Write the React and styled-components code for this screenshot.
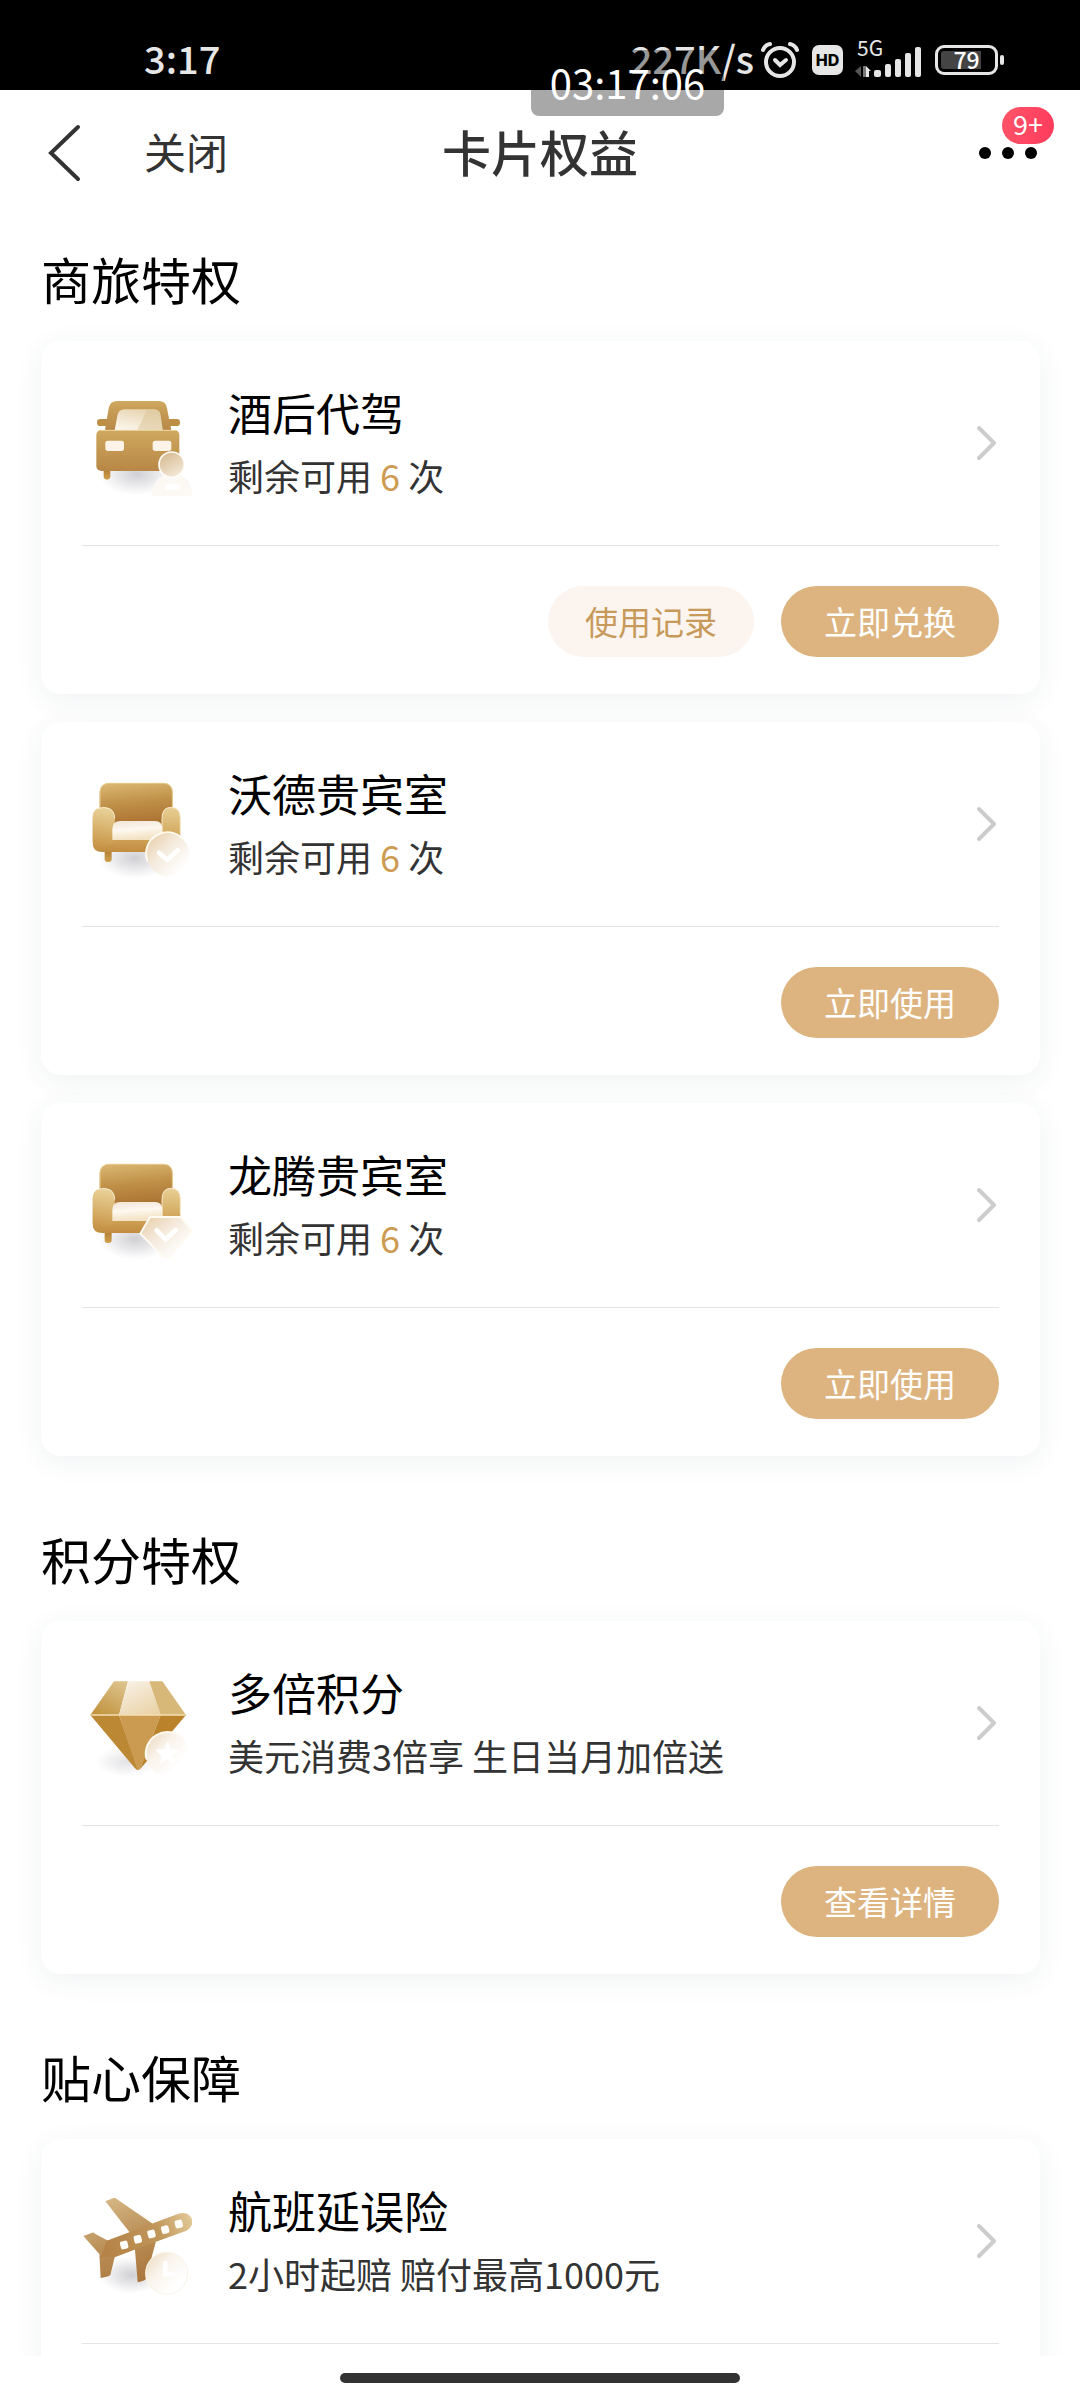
import styled, { createGlobalStyle } from 'styled-components';

const sections = [
    {
        title: '商旅特权',
        cards: [
            { id: 'driver', icon: 'car', title: '酒后代驾', count: 6, actions: ['使用记录', '立即兑换'] },
            { id: 'wode', icon: 'sofaRound', title: '沃德贵宾室', count: 6, actions: ['立即使用'] },
            { id: 'longteng', icon: 'sofaHex', title: '龙腾贵宾室', count: 6, actions: ['立即使用'] },
        ],
    },
    {
        title: '积分特权',
        cards: [
            { id: 'points', icon: 'diamond', title: '多倍积分', text: '美元消费3倍享 生日当月加倍送', actions: ['查看详情'] },
        ],
    },
    {
        title: '贴心保障',
        cards: [
            { id: 'flight', icon: 'plane', title: '航班延误险', text: '2小时起赔 赔付最高1000元', actions: [] },
        ],
    },
];

// gradients shared by all benefit icons
function IconDefs() {
    return (
        <HiddenSvg aria-hidden="true">
            <defs>
                <linearGradient id="gold" x1="0" y1="0" x2="0" y2="1">
                    <stop offset="0" stopColor="#cfa85e" />
                    <stop offset="1" stopColor="#b88747" />
                </linearGradient>
                <linearGradient id="goldDark" x1="0" y1="0" x2="0.15" y2="1">
                    <stop offset="0" stopColor="#dcb973" />
                    <stop offset="0.45" stopColor="#bf9048" />
                    <stop offset="1" stopColor="#a5692b" />
                </linearGradient>
                <linearGradient id="arm" x1="0.6" y1="0" x2="0.4" y2="1">
                    <stop offset="0" stopColor="#ecd7a2" />
                    <stop offset="1" stopColor="#c99748" />
                </linearGradient>
                <linearGradient id="base" x1="0" y1="0" x2="0" y2="1">
                    <stop offset="0" stopColor="#e8cf94" />
                    <stop offset="0.6" stopColor="#d3a95f" />
                    <stop offset="1" stopColor="#c18c40" />
                </linearGradient>
                <linearGradient id="leg" x1="0" y1="0" x2="0" y2="1">
                    <stop offset="0" stopColor="#a8752f" />
                    <stop offset="1" stopColor="#d0a04c" />
                </linearGradient>
                <linearGradient id="glass" x1="0.2" y1="1" x2="0.7" y2="0">
                    <stop offset="0" stopColor="#fbf6ec" />
                    <stop offset="1" stopColor="#e6d3ad" />
                </linearGradient>
                <linearGradient id="cushion" x1="0" y1="0" x2="0.2" y2="1">
                    <stop offset="0" stopColor="#f1e4d6" />
                    <stop offset="0.5" stopColor="#fdf8f0" />
                    <stop offset="1" stopColor="#f3e2c2" />
                </linearGradient>
                <linearGradient id="badge" x1="0.1" y1="0.1" x2="0.85" y2="0.85">
                    <stop offset="0" stopColor="#ead3b2" />
                    <stop offset="0.45" stopColor="#f5ebde" />
                    <stop offset="1" stopColor="#ffffff" />
                </linearGradient>
                <linearGradient id="badgePale" x1="0.05" y1="0.2" x2="0.7" y2="0.8">
                    <stop offset="0" stopColor="#efdfc8" />
                    <stop offset="0.4" stopColor="#f9f3ea" />
                    <stop offset="1" stopColor="#ffffff" />
                </linearGradient>
                <linearGradient id="head" x1="0.2" y1="0.1" x2="0.7" y2="1">
                    <stop offset="0" stopColor="#d8bd96" />
                    <stop offset="1" stopColor="#f5ead9" />
                </linearGradient>
                <linearGradient id="gemLeft" x1="0.8" y1="0" x2="0.2" y2="1">
                    <stop offset="0" stopColor="#ddc28a" />
                    <stop offset="1" stopColor="#c1933f" />
                </linearGradient>
                <linearGradient id="gemMid" x1="0.2" y1="0" x2="0.8" y2="1">
                    <stop offset="0" stopColor="#f8f1e5" />
                    <stop offset="1" stopColor="#e9d2a6" />
                </linearGradient>
                <linearGradient id="wing" gradientUnits="userSpaceOnUse" x1="110" y1="80" x2="215" y2="335">
                    <stop offset="0" stopColor="#d6b987" />
                    <stop offset="0.5" stopColor="#bb9058" />
                    <stop offset="1" stopColor="#a9753c" />
                </linearGradient>
                <linearGradient id="body" gradientUnits="userSpaceOnUse" x1="110" y1="240" x2="365" y2="140">
                    <stop offset="0" stopColor="#b58347" />
                    <stop offset="0.6" stopColor="#c0965a" />
                    <stop offset="1" stopColor="#e3ca98" />
                </linearGradient>
                <radialGradient id="shade">
                    <stop offset="0" stopColor="#a0a0a8" stopOpacity="0.5" />
                    <stop offset="0.5" stopColor="#b0b0b8" stopOpacity="0.3" />
                    <stop offset="1" stopColor="#c0c0c8" stopOpacity="0" />
                </radialGradient>
            </defs>
        </HiddenSvg>
    );
}

function CarIcon() {
    return (
        <BenefitIcon viewBox="36 54 330 330" aria-hidden="true">
            <ellipse cx="200" cy="312" rx="115" ry="64" fill="url(#shade)" />
            <rect x="101" y="290" width="20" height="39" rx="10" fill="url(#leg)" />
            <rect x="81" y="147" width="40" height="21" rx="10" fill="#bd8f45" />
            <rect x="290" y="147" width="40" height="21" rx="10" fill="#bd8f45" />
            <path d="M105 180 L116 115 Q120 93 142 93 H266 Q288 93 291 115 L304 180 Z" fill="url(#gold)" />
            <path d="M134 180 L142 137 Q146 118 164 118 H252 Q269 118 272 137 L278 180 Z" fill="url(#glass)" />
            <path d="M202 180 L232 118 H252 Q269 118 272 137 L278 180 Z" fill="#dcc69a" opacity="0.55" />
            <rect x="79" y="180" width="249" height="123" rx="15" fill="url(#gold)" />
            <path d="M92 181 H316" stroke="#ecd9ab" strokeWidth="3" strokeLinecap="round" />
            <rect x="106" y="212" width="56" height="31" rx="8" fill="#fdf3e8" />
            <rect x="248" y="212" width="56" height="31" rx="8" fill="#fdf3e8" />
            <path d="M246 377 Q248 325 285 316 H328 Q364 325 367 377 Z" fill="#fcf8f2" opacity="0.94" />
            <circle cx="305" cy="284" r="38" fill="url(#head)" stroke="#fffdf8" strokeWidth="5" />
            <rect x="284" y="342" width="46" height="18" rx="9" fill="#fff" />
        </BenefitIcon>
    );
}

function Sofa() {
    return (
        <g>
            <ellipse cx="195" cy="294" rx="112" ry="62" fill="url(#shade)" />
            <rect x="104" y="262" width="21" height="44" rx="9" fill="url(#leg)" />
            <rect x="89" y="69" width="219" height="150" rx="28" fill="url(#goldDark)" />
            <path d="M90 142 V96 Q91 70 118 70 H280 Q307 70 307 97 V142" fill="none" stroke="#e7cb8f" strokeWidth="3" />
            <path d="M68 174 Q68 142 101 142 Q134 142 134 176 V236 H276 V176 Q276 142 303 142 Q331 142 331 174 V248 Q331 276 303 276 H97 Q68 276 68 248 Z" fill="url(#base)" />
            <path d="M68 174 Q68 142 101 142 Q134 142 134 176 V240 Q106 276 68 244 Z" fill="url(#arm)" opacity="0.5" />
            <path d="M276 236 V176 Q276 142 303 142 Q331 142 331 174 V220" fill="none" stroke="#f6e9cb" strokeWidth="3" />
            <path d="M84 146 Q101 138 118 146 Q134 154 134 176" fill="none" stroke="#f6e9cb" strokeWidth="3" />
            <path d="M127 240 V206 Q127 183 151 183 H255 Q277 183 277 206 V240 Z" fill="url(#cushion)" />
        </g>
    );
}

function SofaRoundIcon() {
    return (
        <BenefitIcon viewBox="36 27 330 330" aria-hidden="true">
            <Sofa />
            <circle cx="294" cy="284" r="64" fill="url(#badge)" />
            <path d="M232 302 A64 64 0 0 1 340 238" fill="none" stroke="#fffaf0" strokeWidth="6" strokeLinecap="round" />
            <path d="M267 278 L292 300 L323 271" fill="none" stroke="#fff" strokeWidth="14" strokeLinecap="round" />
        </BenefitIcon>
    );
}

function SofaHexIcon() {
    return (
        <BenefitIcon viewBox="36 27 330 330" aria-hidden="true">
            <Sofa />
            <path d="M240 228 H332 L365 270 L298 348 H280 L211 278 Z" fill="url(#badge)" stroke="#fffaf2" strokeWidth="6" strokeLinejoin="round" />
            <path d="M260 268 L287 295 L317 267" fill="none" stroke="#fff" strokeWidth="14" strokeLinecap="round" />
        </BenefitIcon>
    );
}

function DiamondIcon() {
    return (
        <BenefitIcon viewBox="36 24 330 330" aria-hidden="true">
            <ellipse cx="170" cy="305" rx="95" ry="46" fill="url(#shade)" opacity="0.6" />
            <path d="M132 64 H174 L147 165 H61 Z" fill="url(#gemLeft)" />
            <path d="M174 64 H238 L272 165 H147 Z" fill="url(#gemMid)" />
            <path d="M238 64 H277 L348 165 H272 Z" fill="#d8b878" />
            <path d="M61 165 H147 L205 330 Q200 331 195 325 Z" fill="#bd8834" />
            <path d="M147 165 H272 L210 328 Q205 332 201 326 Z" fill="#ca9b50" />
            <path d="M272 165 H348 L210 328 Z" fill="#b9822b" />
            <path d="M64 165 H346" stroke="#f4dfb4" strokeWidth="4" />
            <circle cx="292" cy="282" r="65" fill="url(#badgePale)" />
            <path d="M229 296 A65 65 0 0 1 338 235" fill="none" stroke="#fffaf0" strokeWidth="6" strokeLinecap="round" />
            <path
                d="M293 246 L302 269 L325 271 L307 287 L313 310 L292 298 L271 310 L276 287 L258 271 L283 268 Z"
                fill="#fff"
                stroke="#fff"
                strokeWidth="3"
                strokeLinejoin="round"
            />
        </BenefitIcon>
    );
}

function PlaneIcon() {
    return (
        <BenefitIcon viewBox="36 48 330 330" aria-hidden="true">
            <ellipse cx="185" cy="315" rx="100" ry="56" fill="url(#shade)" />
            <path d="M106 94 L132 83 Q137 83 141 88 L246 160 L258 214 L227 328 Q224 333 203 337 L195 240 L178 186 Z" fill="url(#wing)" />
            <path d="M40 198 L66 188 Q71 187 75 191 L114 212 L134 262 L121 315 Q118 320 92 324 L88 252 Z" fill="url(#wing)" />
            <path d="M110 212 L325 131 Q352 123 364 143 Q374 168 349 182 L262 214 L134 262 L92 262 Z" fill="url(#body)" />
            <g fill="#fffdf8">
                <rect x="-11" y="-12" width="23" height="24" rx="6" transform="translate(162 225) rotate(-14)" />
                <rect x="-11" y="-12" width="23" height="24" rx="6" transform="translate(203 208) rotate(-14)" />
                <rect x="-11" y="-12" width="23" height="24" rx="6" transform="translate(244 192) rotate(-14)" />
                <rect x="-11" y="-12" width="23" height="24" rx="6" transform="translate(285 179) rotate(-14)" />
                <rect x="-11" y="-12" width="23" height="24" rx="6" transform="translate(326 162) rotate(-14)" />
            </g>
            <circle cx="290" cy="310" r="64" fill="url(#badgePale)" opacity="0.96" />
            <circle cx="290" cy="310" r="63" fill="none" stroke="#fbf4ea" strokeWidth="3" />
            <path d="M286 279 V313 H310" fill="none" stroke="#fff" strokeWidth="14" strokeLinecap="round" />
        </BenefitIcon>
    );
}

const icons = {
    car: CarIcon,
    sofaRound: SofaRoundIcon,
    sofaHex: SofaHexIcon,
    diamond: DiamondIcon,
    plane: PlaneIcon,
};

function StatusBar() {
    return (
        <StyledStatus>
            <span className="time">3:17</span>
            <div className="indicators">
                <span className="speed">227K/s</span>
                <svg className="alarm" width="40" height="38" viewBox="0 0 40 38" fill="none" stroke="#e6e6e6" strokeLinecap="round">
                    <circle cx="20" cy="21" r="14" strokeWidth="4" />
                    <path d="M3 9 Q5 4 10 3 M37 9 Q35 4 30 3" strokeWidth="4" />
                    <path d="M15 19 L20 24 L26 19" strokeWidth="4" />
                </svg>
                <span className="hd">HD</span>
                <div className="network">
                    <span>5G</span>
                    <svg width="68" height="36" viewBox="0 0 68 36" fill="#e6e6e6">
                        <path d="M6 24 V35 L0 29 Z" fill="#555" />
                        <path d="M8 24 H11 V35 H8 Z" fill="#777" />
                        <path d="M11 24 L16 29 H14 V35 H11 Z" />
                        <rect x="19" y="28" width="7" height="7" rx="2" />
                        <rect x="30" y="22" width="6" height="13" rx="2" />
                        <rect x="40" y="17" width="6" height="18" rx="2" />
                        <rect x="50" y="11" width="6" height="24" rx="2" />
                        <rect x="60" y="5" width="6" height="30" rx="2" />
                    </svg>
                </div>
                <div className="battery">
                    <span>79</span>
                </div>
                <i className="nub" />
            </div>
            <FloatingClock>03:17:06</FloatingClock>
        </StyledStatus>
    );
}

function BenefitCard({ card }) {
    const Icon = icons[card.icon];

    return (
        <StyledCard>
            <a className="summary" href={`#${card.id}`}>
                <Icon />
                <div className="info">
                    <h3>{card.title}</h3>
                    {card.text ? <p>{card.text}</p> : <p>剩余可用 <em>{card.count}</em> 次</p>}
                </div>
                <svg width="22" height="38" viewBox="0 0 22 38" fill="none" stroke="#cccccc" strokeWidth="4" strokeLinecap="round" strokeLinejoin="round">
                    <path d="M2 4 L17 19 L2 34" />
                </svg>
            </a>
            <div className="actions">
                {card.actions.map((label, key) => (
                    <PillButton type="button" key={label} $light={key < card.actions.length - 1}>
                        {label}
                    </PillButton>
                ))}
            </div>
        </StyledCard>
    );
}

export default function App() {
    return (
        <StyledPage>
            <GlobalStyle />
            <IconDefs />
            <StatusBar />
            <StyledNav>
                <div className="side">
                    <button type="button" aria-label="返回">
                        <svg width="40" height="60" viewBox="0 0 40 60" fill="none" stroke="#333333" strokeWidth="4" strokeLinecap="round">
                            <path d="M35 4 L8 30 L35 56" />
                        </svg>
                    </button>
                    <button type="button">关闭</button>
                </div>
                <h1>卡片权益</h1>
                <div className="side end">
                    <button type="button" className="more" aria-label="更多">
                        <svg width="58" height="14" viewBox="0 0 58 14">
                            <circle cx="6" cy="7" r="6" />
                            <circle cx="29" cy="7" r="6" />
                            <circle cx="52" cy="7" r="6" />
                        </svg>
                        <span>9+</span>
                    </button>
                </div>
            </StyledNav>
            <StyledContent>
                {sections.map((section) => (
                    <StyledSection key={section.title}>
                        <h2>{section.title}</h2>
                        <div className="list">
                            {section.cards.map((card) => (
                                <BenefitCard card={card} key={card.id} />
                            ))}
                        </div>
                    </StyledSection>
                ))}
            </StyledContent>
            <HomeIndicator>
                <span />
            </HomeIndicator>
        </StyledPage>
    );
}

const GlobalStyle = createGlobalStyle`
    * {
        box-sizing: border-box;
        margin: 0;
        padding: 0;
    }
    body {
        background: #ffffff;
        font-family: "Noto Sans CJK SC", "Noto Sans", sans-serif;
    }
    button {
        border: none;
        background: none;
        font-family: inherit;
        cursor: pointer;
    }
    a {
        color: inherit;
        text-decoration: none;
    }
    svg {
        display: block;
        flex-shrink: 0;
    }
`;

const HiddenSvg = styled.svg`
    position: absolute;
    width: 0;
    height: 0;
`;

const BenefitIcon = styled.svg`
    width: 110px;
    height: 110px;
`;

const StyledPage = styled.div`
    height: 100vh;
    display: flex;
    flex-direction: column;
    background: #ffffff;
`;

const StyledStatus = styled.div`
    position: relative;
    flex-shrink: 0;
    height: 90px;
    padding: 30px 76px 0 144px;
    display: flex;
    justify-content: space-between;
    background: #000000;
    color: #e6e6e6;
    font-weight: 500;
    .time,
    .speed {
        font-size: 38px;
        line-height: 56px;
    }
    .indicators {
        display: flex;
        align-items: center;
        height: 60px;
    }
    .speed {
        height: 60px;
    }
    .alarm {
        margin-left: 6px;
    }
    .hd {
        width: 31px;
        height: 30px;
        margin-left: 12px;
        border-radius: 7px;
        background: #e6e6e6;
        color: #000000;
        font-family: Inter, sans-serif;
        font-size: 16px;
        font-weight: 800;
        line-height: 30px;
        text-align: center;
    }
    .network {
        position: relative;
        margin-left: 12px;
        span {
            position: absolute;
            left: 2px;
            top: -8px;
            font-size: 21px;
            font-weight: 400;
            line-height: 26px;
        }
    }
    .battery {
        width: 63px;
        height: 30px;
        margin-left: 12px;
        padding: 3px;
        border: 3px solid #e6e6e6;
        border-radius: 9px;
        span {
            display: block;
            height: 18px;
            border-radius: 3px;
            background: linear-gradient(90deg, #444444 79%, transparent 79%);
            color: #ffffff;
            font-size: 23px;
            line-height: 16px;
            text-align: center;
        }
    }
    .nub {
        width: 4px;
        height: 10px;
        margin-left: 2px;
        border-radius: 2px;
        background: #e6e6e6;
    }
`;

const FloatingClock = styled.div`
    position: absolute;
    top: 50px;
    right: 356px;
    z-index: 2;
    width: 193px;
    height: 66px;
    border-radius: 8px;
    background: rgba(0, 0, 0, 0.34);
    color: #ffffff;
    font-size: 40px;
    font-weight: 400;
    line-height: 64px;
    text-align: center;
`;

const StyledNav = styled.header`
    flex-shrink: 0;
    height: 126px;
    padding: 0 43px;
    display: flex;
    align-items: center;
    color: #333333;
    .side {
        flex: 1;
        display: flex;
        align-items: center;
        gap: 61px;
        button {
            color: #333333;
            font-size: 42px;
            line-height: 60px;
            padding-bottom: 4px;
        }
        button[aria-label] {
            padding: 0;
        }
    }
    .end {
        justify-content: flex-end;
    }
    h1 {
        padding-bottom: 4px;
        font-size: 49px;
        font-weight: 500;
        line-height: 70px;
    }
    .more {
        position: relative;
        svg {
            fill: #000000;
        }
        span {
            position: absolute;
            left: 23px;
            bottom: 16px;
            width: 52px;
            height: 37px;
            border-radius: 19px;
            background: linear-gradient(100deg, #ff5468, #ff3b5c);
            color: #ffffff;
            font-size: 27px;
            line-height: 34px;
            text-align: center;
        }
    }
`;

const StyledContent = styled.main`
    flex: 1;
    min-height: 0;
    overflow-y: auto;
    scrollbar-width: none;
`;

const StyledSection = styled.section`
    padding: 27px 40px 40px 41px;
    h2 {
        margin-bottom: 28px;
        color: #000000;
        font-size: 50px;
        font-weight: 400;
        line-height: 70px;
    }
    .list {
        display: flex;
        flex-direction: column;
        gap: 28px;
    }
`;

const StyledCard = styled.article`
    padding: 0 41px;
    border-radius: 20px;
    background: #ffffff;
    box-shadow: 0 6px 28px rgba(40, 70, 80, 0.07);
    .summary {
        height: 205px;
        display: flex;
        align-items: center;
        border-bottom: 1px solid #e4e4e4;
    }
    .info {
        flex: 1;
        margin-left: 36px;
    }
    h3 {
        color: #000000;
        font-size: 44px;
        font-weight: 400;
        line-height: 64px;
    }
    p {
        color: #333333;
        font-size: 36px;
        line-height: 62px;
    }
    em {
        color: #cd9b52;
        font-style: normal;
    }
    .actions {
        min-height: 148px;
        padding: 40px 0 37px;
        display: flex;
        justify-content: flex-end;
        gap: 27px;
    }
`;

const PillButton = styled.button`
    height: 71px;
    padding: 0 ${({ $light }) => ($light ? '37px' : '43px')};
    border-radius: 36px;
    background: ${({ $light }) => ($light ? '#fcf5ef' : '#ddb47f')};
    color: ${({ $light }) => ($light ? '#c79a5b' : '#ffffff')};
    font-size: 33px;
    line-height: 71px;
`;

const HomeIndicator = styled.footer`
    flex-shrink: 0;
    height: 44px;
    display: flex;
    justify-content: center;
    align-items: center;
    background: #ffffff;
    span {
        width: 37%;
        height: 10px;
        border-radius: 5px;
        background: #333333;
    }
`;
